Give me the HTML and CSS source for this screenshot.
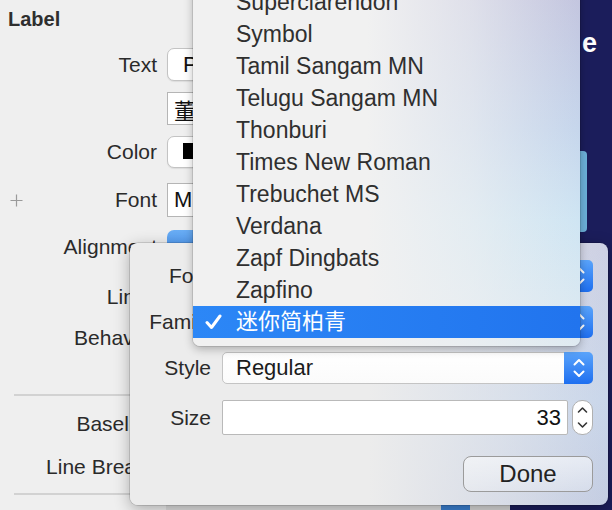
FILE: index.html
```html
<!DOCTYPE html>
<html>
<head>
<meta charset="utf-8">
<title>Font panel</title>
<link rel="stylesheet" href="styles.css">
</head>
<body>
<div class="app">
  <div class="inspector">
    <div class="title">Label</div>
    <div class="row r-text"><div class="lbl">Text</div><div class="fld popup">Plain</div></div>
    <div class="row r-content"><div class="lbl"></div><div class="fld textfield cjk">董</div></div>
    <div class="row r-color"><div class="lbl">Color</div><div class="fld popup"><span class="swatch"></span></div></div>
    <div class="row r-font"><div class="lbl"><svg class="plus" width="13" height="13" viewBox="0 0 13 13"><path d="M6.5 0.5V12.5M0.5 6.5H12.5" stroke="#9a9a9a" stroke-width="1.2" fill="none"/></svg>Font</div><div class="fld textfield">M</div></div>
    <div class="row r-align"><div class="lbl">Alignment</div><div class="fld segmented"></div></div>
    <div class="row r-lines"><div class="lbl">Lines</div></div>
    <div class="row r-behavior"><div class="lbl">Behavior</div></div>
    <div class="sep s1"></div>
    <div class="row r-baseline"><div class="lbl">Baseline</div></div>
    <div class="row r-breaks"><div class="lbl">Line Breaks</div></div>
    <div class="sep s2"></div>
    <div class="strip">
      <span class="seg seg-a"></span>
      <span class="seg seg-b"></span>
      <span class="seg seg-c"></span>
      <span class="seg seg-d"></span>
      <span class="seg seg-e"></span>
    </div>
  </div>
  <div class="canvas">
    <div class="canvas-text">e</div>
    <div class="canvas-btn"></div>
  </div>
</div>

<div class="popover">
  <div class="prow">
    <div class="plbl">Font</div>
    <div class="pfield"><span class="ptext">Custom</span><span class="bstep"><svg width="12" height="22" viewBox="0 0 12 22"><path d="M1.5 7.5L6 3L10.5 7.5M1.5 14.5L6 19L10.5 14.5" stroke="#fff" stroke-width="2" fill="none" stroke-linecap="round" stroke-linejoin="round"/></svg></span></div>
  </div>
  <div class="prow">
    <div class="plbl">Family</div>
    <div class="pfield"><span class="ptext cjk">迷你简柏青</span><span class="bstep"><svg width="12" height="22" viewBox="0 0 12 22"><path d="M1.5 7.5L6 3L10.5 7.5M1.5 14.5L6 19L10.5 14.5" stroke="#fff" stroke-width="2" fill="none" stroke-linecap="round" stroke-linejoin="round"/></svg></span></div>
  </div>
  <div class="prow">
    <div class="plbl">Style</div>
    <div class="pfield"><span class="ptext">Regular</span><span class="bstep"><svg width="12" height="22" viewBox="0 0 12 22"><path d="M1.5 7.5L6 3L10.5 7.5M1.5 14.5L6 19L10.5 14.5" stroke="#fff" stroke-width="2" fill="none" stroke-linecap="round" stroke-linejoin="round"/></svg></span></div>
  </div>
  <div class="prow prow-size">
    <div class="plbl">Size</div>
    <div class="sizefield">33</div>
    <div class="stepper"><svg width="11" height="27" viewBox="0 0 11 27"><path d="M1.5 8L5.5 4L9.5 8M1.5 19L5.5 23L9.5 19" stroke="#333" stroke-width="1.6" fill="none" stroke-linecap="round" stroke-linejoin="round"/></svg></div>
  </div>
  <div class="prow prow-done">
    <div class="done">Done</div>
  </div>
</div>

<div class="menu">
  <div class="item"><span class="check"></span><span class="name">Superclarendon</span></div>
  <div class="item"><span class="check"></span><span class="name">Symbol</span></div>
  <div class="item"><span class="check"></span><span class="name">Tamil Sangam MN</span></div>
  <div class="item"><span class="check"></span><span class="name">Telugu Sangam MN</span></div>
  <div class="item"><span class="check"></span><span class="name">Thonburi</span></div>
  <div class="item"><span class="check"></span><span class="name">Times New Roman</span></div>
  <div class="item"><span class="check"></span><span class="name">Trebuchet MS</span></div>
  <div class="item"><span class="check"></span><span class="name">Verdana</span></div>
  <div class="item"><span class="check"></span><span class="name">Zapf Dingbats</span></div>
  <div class="item"><span class="check"></span><span class="name">Zapfino</span></div>
  <div class="item sel"><span class="check"><svg width="17" height="16" viewBox="0 0 17 16"><path d="M2 8.5L6.5 13.5L15 2" stroke="#fff" stroke-width="3" fill="none" stroke-linecap="round" stroke-linejoin="round"/></svg></span><span class="name cjk">迷你简柏青</span></div>
</div>
</body>
</html>
```

FILE: styles.css
```css
html, body {
  margin: 0;
  padding: 0;
}
body {
  width: 612px;
  height: 510px;
  overflow: hidden;
  position: relative;
  background: #efefef;
  font-family: "Liberation Sans", Arial, sans-serif;
  color: #2a2a2a;
}
.cjk {
  font-family: "Liberation Sans", "Noto Sans CJK SC", sans-serif;
}

.app {
  display: flex;
  height: 510px;
}
.inspector {
  width: 580px;
  flex: none;
  box-sizing: border-box;
  padding-left: 8px;
  background: #efefef;
  overflow: hidden;
  display: flex;
  flex-direction: column;
}
.title {
  font-weight: bold;
  font-size: 20px;
  line-height: 20px;
  margin-top: 9px;
  color: #2e2e2e;
  flex: none;
}
.row {
  display: flex;
  align-items: center;
  height: 33px;
  flex: none;
  gap: 10px;
}
.lbl {
  width: 149px;
  flex: none;
  display: flex;
  justify-content: flex-end;
  align-items: center;
  font-size: 21px;
  white-space: nowrap;
}
.plus {
  margin-right: auto;
  margin-left: 2px;
}
.r-text { margin-top: 19px; }
.r-content { margin-top: 11px; }
.r-color { margin-top: 11px; height: 32px; }
.r-font { margin-top: 15px; height: 34px; }
.r-align { margin-top: 13px; }
.r-lines { margin-top: 17px; }
.r-behavior { margin-top: 8px; }
.r-baseline { margin-top: 11px; }
.r-breaks { margin-top: 10px; }
.sep {
  flex: none;
  height: 2px;
  margin-left: 6px;
  width: 300px;
  background: #d2d2d2;
}
.s1 { margin-top: 40px; }
.s2 { margin-top: 10px; }

.strip {
  flex: none;
  display: flex;
  height: 6px;
  margin-top: 10px;
  margin-left: -8px;
}
.seg { height: 100%; flex: none; }
.seg-a { width: 166px; }
.seg-b { width: 275px; background: #dedede; }
.seg-c { width: 29px; background: #3b7fd0; }
.seg-d { width: 40px; background: #d6d6d6; }
.seg-e { flex: 1; background: #1b1d5b; }

.fld {
  width: 380px;
  height: 100%;
  box-sizing: border-box;
  background: #fff;
  border: 1px solid #c3c3c3;
  font-size: 22px;
  display: flex;
  align-items: center;
  color: #111;
}
.popup {
  border-radius: 7px;
  padding-left: 15px;
  box-shadow: 0 1px 1px rgba(0, 0, 0, 0.08);
}
.textfield {
  border-radius: 0;
  padding-left: 6px;
  border-color: #b5b5b5;
}
.swatch {
  width: 18px;
  height: 16px;
  background: #000;
  margin-top: -2px;
}
.segmented {
  border: none;
  border-radius: 7px 0 0 7px;
  background: linear-gradient(#6aaef5, #3a86ec);
}

.canvas {
  flex: 1;
  background: #1b1d5b;
  overflow: hidden;
}
.canvas-text {
  color: #fff;
  font-weight: bold;
  font-size: 27px;
  line-height: 30px;
  margin-top: 28px;
  padding-left: 2px;
}
.canvas-btn {
  width: 7px;
  height: 81px;
  margin-top: 93px;
  background: #6cb0d9;
  border-radius: 0 4px 4px 0;
}

/* Font popover */
.popover {
  position: absolute;
  left: 130px;
  top: 243px;
  width: 478px;
  height: 262px;
  box-sizing: border-box;
  border-radius: 8px;
  padding: 17px 15px 0 0;
  display: flex;
  flex-direction: column;
  gap: 14px;
  background:
    linear-gradient(to right, rgba(236, 236, 236, 1) 0%, rgba(236, 236, 236, 1) 50%, rgba(236, 236, 236, 0.5) 78%, rgba(236, 236, 236, 0) 100%),
    linear-gradient(to bottom, #cdd0e3 0%, #c9d6ea 60%, #c4cde2 100%);
  box-shadow: 0 0 0 1px rgba(0, 0, 0, 0.12), 0 4px 16px rgba(0, 0, 0, 0.3);
}
.prow {
  display: flex;
  align-items: center;
  height: 32px;
  flex: none;
}
.plbl {
  width: 81px;
  margin-right: 11px;
  flex: none;
  text-align: right;
  font-size: 21px;
  white-space: nowrap;
}
.pfield {
  flex: 1;
  height: 100%;
  box-sizing: border-box;
  display: flex;
  align-items: center;
  background: linear-gradient(#ffffff, #fbfbfb);
  border: 1px solid #c4c4c4;
  border-radius: 5px;
  font-size: 22px;
  padding-left: 13px;
  color: #1c1c1c;
}
.bstep {
  margin-left: auto;
  align-self: stretch;
  width: 29px;
  margin-top: -1px;
  margin-bottom: -1px;
  margin-right: -1px;
  border-radius: 0 5px 5px 0;
  background: linear-gradient(#5aa4fb, #1e6ff0);
  display: flex;
  align-items: center;
  justify-content: center;
}
.prow-size {
  height: 35px;
  margin-top: 2px;
}
.sizefield {
  width: 346px;
  height: 100%;
  box-sizing: border-box;
  background: #fff;
  border: 1px solid #b9b9b9;
  border-radius: 2px;
  font-size: 22px;
  padding-right: 6px;
  display: flex;
  align-items: center;
  justify-content: flex-end;
  color: #111;
}
.stepper {
  margin-left: 4px;
  width: 21px;
  height: 100%;
  box-sizing: border-box;
  background: #fff;
  border: 1px solid #b0b0b0;
  border-radius: 10px;
  display: flex;
  align-items: center;
  justify-content: center;
}
.prow-done {
  height: 36px;
  margin-top: 7px;
  justify-content: flex-end;
}
.done {
  width: 130px;
  height: 36px;
  box-sizing: border-box;
  border: 1px solid #9b9b9b;
  border-radius: 8px;
  background: linear-gradient(rgba(255, 255, 255, 0.55), rgba(255, 255, 255, 0.25));
  font-size: 24px;
  color: #222;
  display: flex;
  align-items: center;
  justify-content: center;
}

/* Dropdown menu */
.menu {
  position: absolute;
  left: 193px;
  top: -14px;
  width: 387px;
  padding-bottom: 8px;
  border-radius: 0 0 7px 7px;
  box-shadow: 0 3px 10px rgba(0, 0, 0, 0.28), 0 0 0 1px rgba(0, 0, 0, 0.1);
  background:
    linear-gradient(to right, rgba(241, 241, 241, 1) 0%, rgba(241, 241, 241, 1) 45%, rgba(241, 241, 241, 0.6) 72%, rgba(241, 241, 241, 0) 100%),
    linear-gradient(to bottom, #c3c4de 0%, #c6d6ec 40%, #cfe5f3 65%, #dfeaf1 100%);
}
.item {
  height: 32px;
  display: flex;
  align-items: center;
  font-size: 23px;
  line-height: 32px;
  color: #2f2f2f;
  white-space: nowrap;
}
.check {
  width: 43px;
  flex: none;
  box-sizing: border-box;
  padding-left: 12px;
  display: flex;
  align-items: center;
}
.item.sel {
  color: #fff;
  background: linear-gradient(to right, #2c87f6, #2174ee);
}
.item.sel .name {
  font-size: 22px;
}
```
